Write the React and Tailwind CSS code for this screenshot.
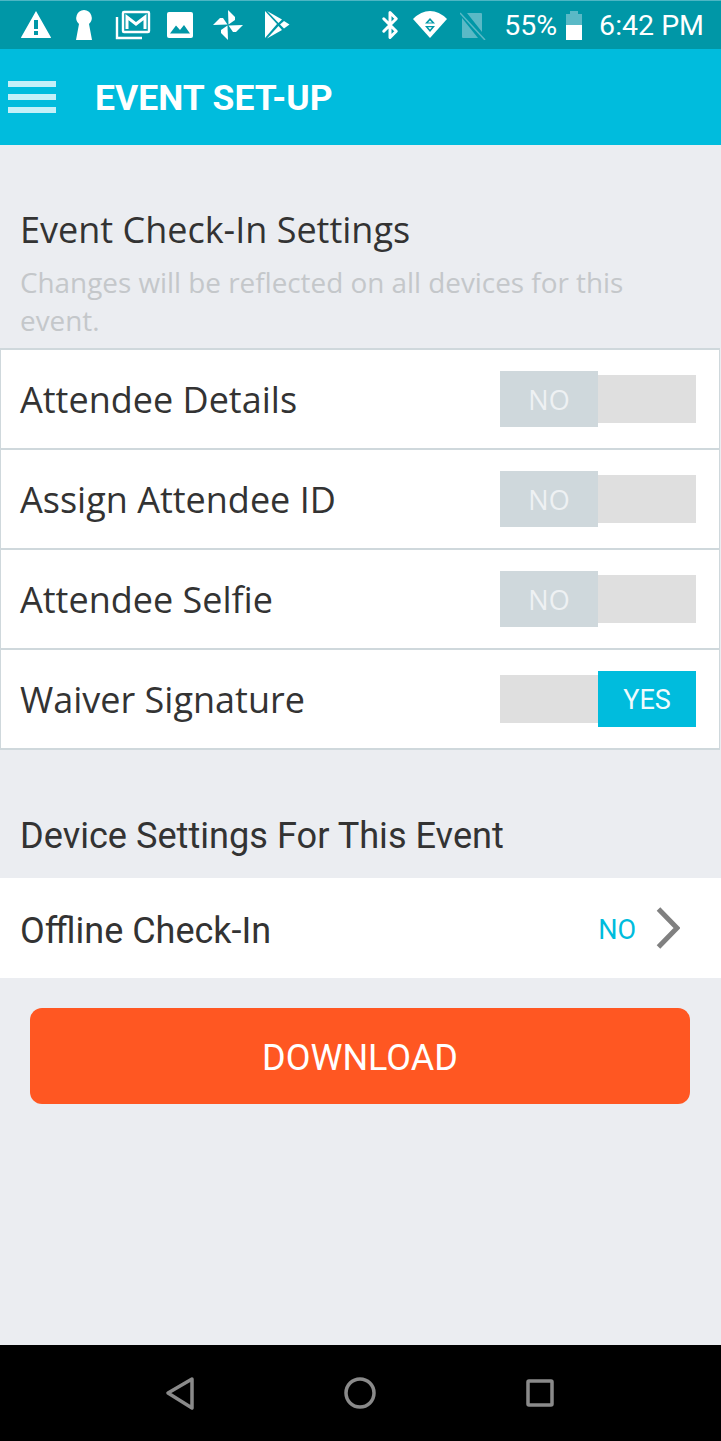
import { Bluetooth } from "lucide-react";

const openSans = "font-['Open_Sans',sans-serif]";
const roboto = "font-['Roboto',sans-serif]";

function StatusIcons() {
  return (
    <div className="flex items-center">
      {/* alert */}
      <svg width="32" height="30" viewBox="0 0 32 30" className="ml-[20px]" fill="white">
        <path fillRule="evenodd" d="M16 1 L31 27.5 Q31 28 30 28 L2 28 Q1 28 1 27.5 Z M14 10 V19 H18 V10 Z M14 21 V25 H18 V21 Z" />
      </svg>
      {/* keyhole */}
      <svg width="20" height="32" viewBox="0 0 20 32" className="ml-[22px]" fill="white">
        <path d="M10 1 a8 8 0 0 1 5 14 L18 31 H2 L5 15 A8 8 0 0 1 10 1 Z" />
      </svg>
      {/* gmail stack */}
      <svg width="36" height="30" viewBox="0 0 36 30" className="ml-[21px]" fill="none" stroke="white">
        <path d="M2 7 V28 H27" strokeWidth="2.4" />
        <rect x="8" y="2" width="26" height="20" rx="1" strokeWidth="2.4" />
        <path d="M12 19 V7 L21 14 L30 7 V19" strokeWidth="3" />
      </svg>
      {/* picture */}
      <svg width="26" height="26" viewBox="0 0 26 26" className="ml-[16px]">
        <rect width="26" height="26" rx="2" fill="white" />
        <path d="M3 21.5 L9 13.5 L13 18 L17 13 L23 21.5 Z" fill="#0097a7" />
      </svg>
      {/* pinwheel */}
      <svg width="30" height="30" viewBox="0 0 30 30" className="ml-[20px]" fill="white">
        <path d="M15 0 L22 7 L22 10 L15.5 14.5 Z" />
        <path d="M30 15 L23 22 L20 22 L15.5 15.5 Z" />
        <path d="M15 30 L8 23 L8 20 L14.5 15.5 Z" />
        <path d="M0 15 L7 8 L10 8 L14.5 14.5 Z" />
      </svg>
      {/* play store */}
      <svg width="26" height="30" viewBox="0 0 26 30" className="ml-[21px]" fill="white">
        <path d="M1 1 L13 14 L1 28 Z" />
        <path d="M3 1 L18 9.5 L14.5 13 Z" />
        <path d="M3 28.5 L18 20 L14.5 16 Z" />
        <path d="M20 11 L25.5 14.5 L20 18.5 L16 14.5 Z" />
      </svg>
    </div>
  );
}

function StatusRight() {
  return (
    <div className={`flex items-center text-white ${roboto}`}>
      <Bluetooth size={30} strokeWidth={2.4} color="white" />
      {/* wifi */}
      <svg width="36" height="30" viewBox="0 0 36 30" className="ml-[7px]">
        <path d="M18 28 L1 9 Q9 1 18 1 Q27 1 35 9 Z" fill="white" />
        <path d="M18 8 L23 13.5 H13 Z M18 22 L23 16 H13 Z" fill="#0097a7" />
        <path d="M18 10.5 L20 12.5 H16 Z M18 19.5 L20 17.2 H16 Z" fill="white" />
      </svg>
      {/* no sim */}
      <svg width="26" height="30" viewBox="0 0 26 30" className="ml-[12px]">
        <path d="M7 3 H21 Q22 3 22 4 V22 Z M2 8 L18 28 H3 Q2 28 2 27 Z" fill="#5ab9c6" />
        <path d="M0 3 L25 30" stroke="#5ab9c6" strokeWidth="1.5" />
      </svg>
      <span className="ml-[18px] pt-[3px] text-[28.5px] leading-none">55%</span>
      {/* battery */}
      <div className="ml-[9px] flex w-[16px] flex-col items-center">
        <div className="h-[3px] w-[8px] bg-[#5ab9c6]" />
        <div className="h-[11px] w-full bg-[#5ab9c6]" />
        <div className="h-[15px] w-full bg-white" />
      </div>
      <span className="ml-[17px] mr-[17px] pt-[3px] text-[28.5px] leading-none">6:42 PM</span>
    </div>
  );
}

function Toggle({ on }) {
  return (
    <div className="flex items-center text-[27px]">
      {on ? (
        <>
          <div className="h-[48px] w-[98px] bg-[#dfdfdf]" />
          <div className={`flex h-[56px] w-[98px] items-center justify-center bg-[#00bcdd] pt-[2px] text-[#f0fbfd] ${roboto}`}>YES</div>
        </>
      ) : (
        <>
          <div className={`flex h-[56px] w-[98px] items-center justify-center bg-[#cfd8dc] pt-[2px] text-[#eef1f3] ${openSans}`}>NO</div>
          <div className="h-[48px] w-[98px] bg-[#dfdfdf]" />
        </>
      )}
    </div>
  );
}

function SettingRow({ label, on }) {
  return (
    <div className="flex h-[100px] items-center justify-between border-b-2 border-[#cfd8dc] pl-[19px] pr-[23px]">
      <span className={`pt-[2px] text-[36px] text-[#333] ${openSans}`}>{label}</span>
      <Toggle on={on} />
    </div>
  );
}

export default function App() {
  return (
    <div className="flex h-[1441px] w-[721px] flex-col bg-[#ebedf1]">
      <div className="flex h-[49px] shrink-0 items-center justify-between border-t border-[#4db6c4] bg-[#0097a7]">
        <StatusIcons />
        <StatusRight />
      </div>

      <div className="flex h-[96px] shrink-0 items-center bg-[#00bcdd]">
        <div className="ml-[8px] flex w-[48px] flex-col gap-[7px]">
          <div className="h-[6px] bg-[#c4f0f8]" />
          <div className="h-[6px] bg-[#c4f0f8]" />
          <div className="h-[6px] bg-[#c4f0f8]" />
        </div>
        <h1 className={`ml-[39px] pt-[4px] text-[35.5px] font-bold text-white ${roboto}`}>EVENT SET-UP</h1>
      </div>

      <div className="flex-1">
        <div className={`pl-[20px] pr-[21px] pt-[61px] ${openSans}`}>
          <h2 className="text-[36px] leading-[48px] text-[#333]">Event Check-In Settings</h2>
          <p className="mt-[9px] pb-[9px] text-[27.85px] leading-[38px] text-[#c4c7ca]">
            Changes will be reflected on all devices for this event.
          </p>
        </div>

        <div className="mr-px border-x border-t-2 border-[#cfd8dc] bg-white">
          <SettingRow label="Attendee Details" />
          <SettingRow label="Assign Attendee ID" />
          <SettingRow label="Attendee Selfie" />
          <SettingRow label="Waiver Signature" on />
        </div>

        <h2 className={`mt-[62px] pl-[20px] text-[36.15px] leading-[48px] text-[#333] ${roboto}`}>Device Settings For This Event</h2>

        <div className="mt-[18px] flex h-[100px] items-center justify-between bg-white pl-[20px] pr-[41px]">
          <span className={`pt-[6px] text-[36px] text-[#333] ${roboto}`}>Offline Check-In</span>
          <div className="flex items-center">
            <span className={`pt-[4px] text-[27px] text-[#00bcdd] ${roboto}`}>NO</span>
            <svg width="24" height="42" viewBox="0 0 24 42" className="ml-[20px]" fill="none" stroke="#808080" strokeWidth="5">
              <path d="M2.5 2 L21 21 L2.5 40" />
            </svg>
          </div>
        </div>

        <div className="mt-[30px] px-[30px]">
          <button className={`flex h-[96px] w-[660px] items-center justify-center rounded-[12px] bg-[#ff5722] pt-[4px] text-[36px] text-white ${roboto}`}>
            DOWNLOAD
          </button>
        </div>
      </div>

      <div className="flex h-[96px] shrink-0 items-center bg-black">
        <svg width="720" height="96" viewBox="0 0 720 96" fill="none" stroke="#8a8a8a" strokeWidth="3.5" strokeLinejoin="round">
          <path d="M192 34 L168 48 L192 63 Z" />
          <circle cx="360" cy="48" r="14" />
          <rect x="528" y="36" width="24" height="24" rx="1" />
        </svg>
      </div>
    </div>
  );
}
